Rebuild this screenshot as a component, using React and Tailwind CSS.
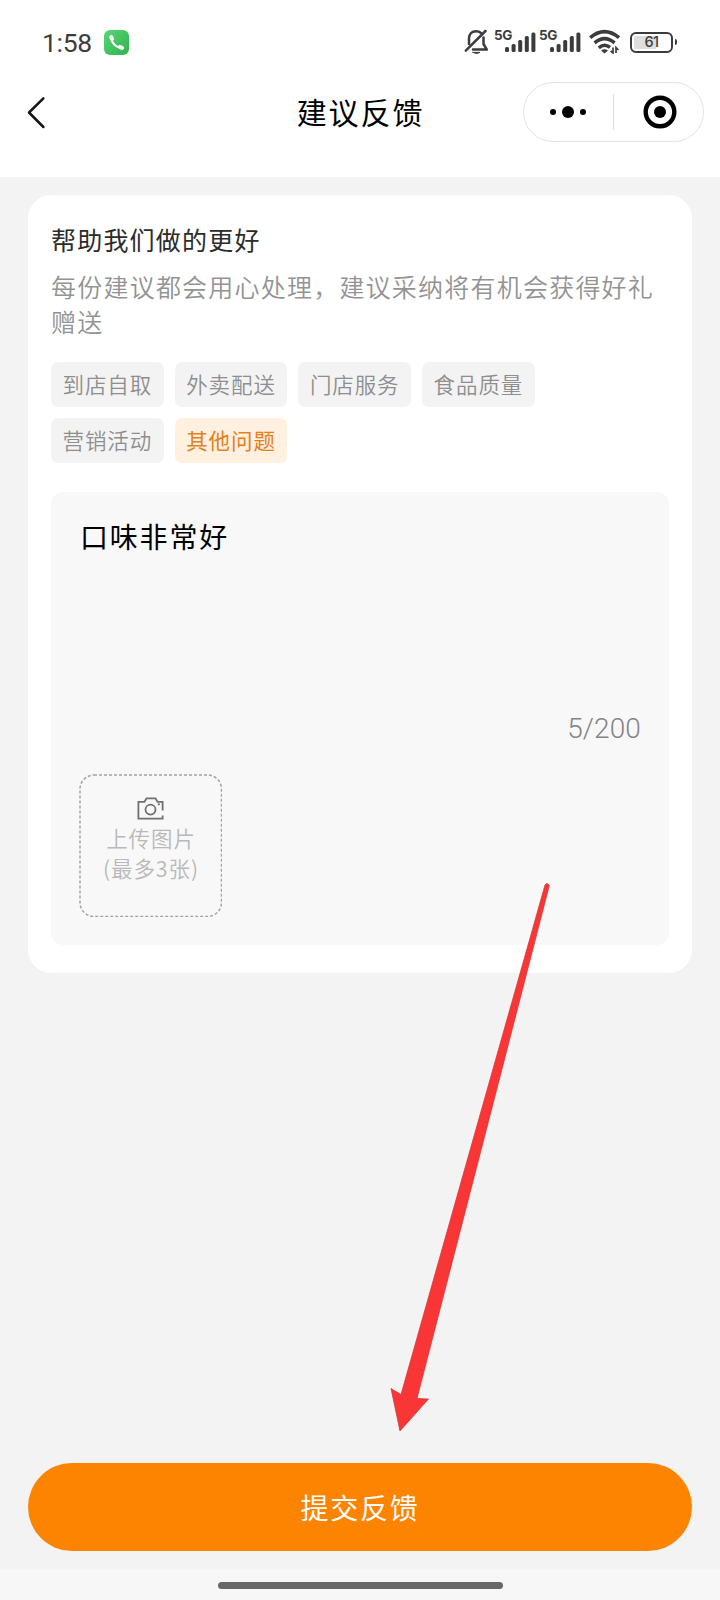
import React, { useState } from 'react';

const tags = ['到店自取', '外卖配送', '门店服务', '食品质量', '营销活动', '其他问题'];

const Signal = () => (
  <svg width="31" height="20" viewBox="0 0 31 20" fill="#3c3c3c">
    <rect x="0" y="15" width="4" height="5" rx="1.5" />
    <rect x="6.6" y="12" width="4" height="8" rx="1.5" />
    <rect x="13.2" y="8" width="4" height="12" rx="1.5" />
    <rect x="19.8" y="4" width="4" height="16" rx="1.5" />
    <rect x="26.4" y="0.5" width="4" height="19.5" rx="1.5" />
  </svg>
);

const StatusBar = () => (
  <div className="flex h-[74px] items-start justify-between pl-[42px] pr-[43px] text-[#3c3c3c]">
    <div className="flex pt-[29px]">
      <span className="w-[50px] whitespace-nowrap font-['Roboto',sans-serif] text-[26.5px] font-[450] leading-[28px] tracking-[-0.3px]">1:58</span>
      <svg className="ml-3 mt-[1px]" width="25" height="25" viewBox="0 0 25 25">
        <defs>
          <linearGradient id="call" x1="0" y1="0" x2="1" y2="1">
            <stop offset="0" stopColor="#55d873" />
            <stop offset="1" stopColor="#32b150" />
          </linearGradient>
        </defs>
        <rect width="25" height="25" rx="6" fill="url(#call)" />
        <path d="M7.2 8.2 Q8.3 15.8 16.8 18.2" fill="none" stroke="#fff" strokeWidth="2.2" />
        <ellipse cx="7.6" cy="8" rx="2.1" ry="3" transform="rotate(-20 7.6 8)" fill="#fff" />
        <ellipse cx="17" cy="17.4" rx="3.2" ry="2.1" transform="rotate(25 17 17.4)" fill="#fff" />
      </svg>
    </div>
    <div className="flex">
      <svg className="mt-[28px]" width="25" height="28" viewBox="0 0 25 28" fill="none" stroke="#3c3c3c" strokeWidth="2.5" strokeLinecap="round" strokeLinejoin="round">
        <path d="M1.8 22.6 L21.5 3" />
        <path d="M5 16 V10.5 C5 6 8 3.2 12 3.2 C14 3.2 15.6 3.8 17 5" />
        <path d="M19.5 9.5 V16 L22.8 21.6 H9" />
        <path d="M9 24.4 H16 Q12.5 26.6 9 24.4 Z" strokeWidth="1" fill="#3c3c3c" />
      </svg>
      <div className="ml-[5px] mt-[27px] flex">
        <span className="-mr-[9px] w-[20px] font-['Inter',sans-serif] text-[13.5px] font-bold leading-[17px] tracking-[-0.4px]">5G</span>
        <div className="mt-[5px]"><Signal /></div>
        <span className="-mr-[9px] ml-[3px] w-[20px] font-['Inter',sans-serif] text-[13.5px] font-bold leading-[17px] tracking-[-0.4px]">5G</span>
        <div className="mt-[5px]"><Signal /></div>
      </div>
      <svg className="ml-[8px] mt-[29px]" width="32" height="25" viewBox="0 0 32 25" fill="none" stroke="#3c3c3c" strokeWidth="3.5">
        <path d="M1.2 8.6 Q15.5 -3.4 30 8.6" />
        <path d="M5.6 13.8 Q15.5 5.4 25.6 13.8" />
        <path d="M9.8 18.8 Q15.5 14 21 18.4" />
        <path d="M12 21.6 Q15.5 18.8 19 21.6 L15.5 24.6 Z" fill="#3c3c3c" stroke="none" />
        <path d="M24 18.5 V24 L21.6 21.8 M27 24 V18.5 L29.4 21" strokeWidth="1.7" />
      </svg>
      <div className="ml-[9px] mt-[31px] flex h-[22px] items-center">
        <div className="flex h-[21px] w-[43px] items-center justify-center rounded-[6px] border-2 border-[#3c3c3c] bg-[linear-gradient(90deg,#dedede_0,#dedede_61%,#fff_61%)] bg-clip-content p-[2px] font-['Inter',sans-serif] text-[14.5px] font-medium leading-none tracking-[-0.7px]">
          61
        </div>
        <div className="ml-[2px] h-[6px] w-[2px] rounded-r-sm bg-[#3c3c3c]" />
      </div>
    </div>
  </div>
);

const NavBar = () => (
  <div className="grid h-[103px] grid-cols-[1fr_auto_1fr] items-start">
    <button type="button" className="ml-[26px] mt-[21px] w-[22px]">
      <svg width="22" height="36" viewBox="0 0 22 36" fill="none" stroke="#151515" strokeWidth="2.5" strokeLinecap="round" strokeLinejoin="round">
        <path d="M17.4 3.4 L3 17.5 L17.4 32" />
      </svg>
    </button>
    <h1 className="mt-[17px] pl-[1px] text-[30px] leading-10 tracking-[1.9px] text-black">建议反馈</h1>
    <div className="mr-[16px] mt-[8px] flex h-[60px] w-[181px] items-center justify-self-end rounded-full border border-[#e3e3e3]">
      <div className="flex w-[89px] items-center justify-center gap-[6px] pr-[2px]">
        <span className="size-[6px] rounded-full bg-black" />
        <span className="size-[12px] rounded-full bg-black" />
        <span className="size-[6px] rounded-full bg-black" />
      </div>
      <div className="h-[36px] w-px bg-[#dedede]" />
      <svg className="ml-[29px]" width="34" height="34" viewBox="0 0 34 34">
        <circle cx="17" cy="17" r="14.3" fill="none" stroke="#000" strokeWidth="4.4" />
        <circle cx="17" cy="17" r="6" />
      </svg>
    </div>
  </div>
);

const App = () => {
  const [selected, setSelected] = useState('其他问题');

  return (
    <div className="relative flex h-[1600px] w-[720px] flex-col bg-[#f3f3f3] font-['Noto_Sans_CJK_SC',sans-serif]">
      <header className="h-[177px] bg-white">
        <StatusBar />
        <NavBar />
      </header>

      <main className="mx-[28px] mt-[18px] h-[778px] rounded-[23px] bg-white px-[23px] pt-[26px]">
        <h2 className="h-[36px] whitespace-nowrap text-[25px] leading-[36px] tracking-[1.2px] text-[#2b2b2b]">帮助我们做的更好</h2>
        <p className="mt-[12px] w-[620px] text-[25px] font-[350] leading-[35px] tracking-[1.22px] text-[#939393]">
          每份建议都会用心处理，建议采纳将有机会获得好礼<br />赠送
        </p>
        <div className="mt-[23px] flex w-[500px] flex-wrap gap-[11px]">
          {tags.map((tag) => (
            <button
              type="button"
              key={tag}
              onClick={() => setSelected(tag)}
              className={`h-[45px] w-[112.7px] whitespace-nowrap rounded-[7px] text-[21.5px] leading-[43px] tracking-[0.9px] ${
                selected === tag ? 'bg-[#fff0e0] text-[#e3801c]' : 'bg-[#f3f3f3] font-[350] text-[#8e8e8e]'
              }`}
            >
              <span className="-mt-[2px] block">{tag}</span>
            </button>
          ))}
        </div>

        <section className="mt-[29px] flex h-[453px] w-[618px] flex-col rounded-[12px] bg-[#f8f8f8] px-[28px]">
          <div className="mt-[24px] h-[40px] pl-[1px] text-[28px] leading-[40px] tracking-[1.8px] text-black">口味非常好</div>
          <div className="mt-[153px] text-right font-['Roboto',sans-serif] text-[28px] font-light leading-[40px] tracking-[0.1px] text-[#848484]">5/200</div>
          <div className="relative mt-[25px] flex size-[143px] flex-col items-center">
            <svg className="absolute inset-0" width="143" height="143" fill="none">
              <rect x="1" y="1" width="141.5" height="141.5" rx="14" stroke="#a3a3a3" strokeWidth="1.5" strokeDasharray="3 2" />
            </svg>
            <svg className="mt-[23px]" width="28" height="24" viewBox="0 0 28 24" fill="none" stroke="#707070" strokeWidth="1.8">
              <path d="M25.6 13.5 V4.8 H20.5 L18.5 1.4 H9.5 L7.5 4.8 H1.4 V21.6 H25.6 V18.5" />
              <circle cx="13.5" cy="12.6" r="5" />
              <path d="M20.8 7.3 H22.8" />
            </svg>
            <div className="mt-[2px] whitespace-nowrap pl-[1px] text-center text-[21.5px] font-[350] leading-[30px] tracking-[0.9px] text-[#b9b9b9]">
              上传图片<br />(最多3张)
            </div>
          </div>
        </section>
      </main>

      <button type="button" className="mx-[28px] mt-[490px] h-[88px] shrink-0 rounded-full bg-[#fc8400] text-[28px] leading-[86px] tracking-[1.8px] text-white">
        <span className="-mt-[1px] block">提交反馈</span>
      </button>

      <footer className="mt-[18px] flex h-[31px] shrink-0 justify-center bg-[#f7f7f7] pt-[13px]">
        <div className="h-[7px] w-[285px] rounded-full bg-[#686868]" />
      </footer>

      <svg className="pointer-events-none absolute left-[380px] top-[870px]" width="180" height="570" viewBox="380 870 180 570">
        <path
          d="M545 885 Q547 882 549.3 885.5 L417 1398.5 L428.5 1399 L400 1431 L391 1388.5 L401 1394.5 Z"
          fill="#f93535"
          stroke="#d23b3b"
          strokeWidth="0.8"
        />
      </svg>
    </div>
  );
};

export default App;
